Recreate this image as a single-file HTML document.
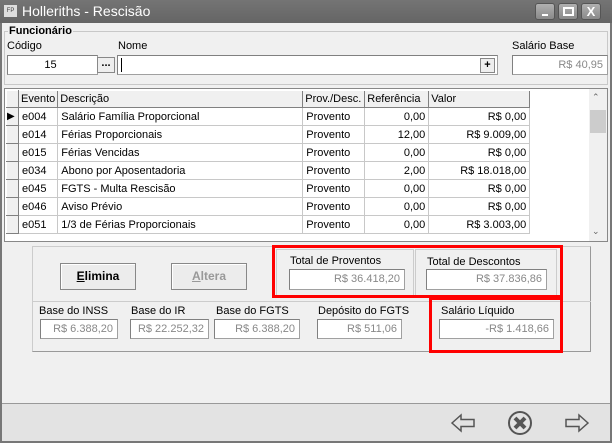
<!DOCTYPE html><html><head><meta charset="utf-8"><style>
*{box-sizing:border-box;margin:0;padding:0}
body{width:612px;height:443px;overflow:hidden;background:#f0f0f0;font-family:"Liberation Sans",sans-serif;font-size:11px;color:#000;position:relative}
.a{position:absolute}
.title{left:0;top:0;width:612px;height:23px;background:linear-gradient(#747474,#656565);color:#fff;font-size:14px}
.wb{top:3px;width:20px;height:17px;background:linear-gradient(#b0b0b0,#8a8a8a);border:1px solid #555;border-radius:3px}
.in{background:#fff;border:1px solid #a0a0a0;border-top-color:#808080;border-left-color:#808080;text-align:right;color:#888;padding-right:4px;line-height:18px}
.grid td{border-right:1px solid #c8c8c8;border-bottom:1px solid #c8c8c8;height:18px;padding:0 3px;white-space:nowrap}
.grid th{font-weight:normal;text-align:left;border-right:1px solid #808080;border-bottom:1px solid #808080;height:17px;padding:0 2px;background:#f0f0f0}
.grid .ind{background:#f0f0f0;border:1px solid #fff;border-right-color:#808080;border-bottom-color:#808080;padding:0}
.r{text-align:right}
.btn{border:1px solid #888;background:#ececec;box-shadow:inset 1px 1px #fff;text-align:center;font-weight:bold;line-height:24px;font-size:12px}
.red{border:3px solid #f00}
</style></head><body>
<div class="a" style="left:0;top:0;width:612px;height:443px;border-left:2px solid #777;border-right:2px solid #777;border-bottom:2px solid #777"></div>
<div class="a title"><div class="a" style="left:4px;top:5px;width:13px;height:12px;background:#ddd;color:#444;font-size:6px;text-align:center;line-height:12px">FP</div><div class="a" style="left:22px;top:3px">Holleriths - Rescisão</div>
<div class="a wb" style="left:535px"><div class="a" style="left:6px;top:10px;width:6px;height:2px;background:#fff"></div></div>
<div class="a wb" style="left:558px"><div class="a" style="left:4px;top:3px;width:11px;height:9px;border:2px solid #fff"></div></div>
<div class="a wb" style="left:581px;color:#fff;font-weight:bold;font-size:13px;text-align:center;line-height:15px">X</div></div>
<div class="a" style="left:4px;top:31px;width:604px;height:54px;border:1px solid #c8c8c8"></div>
<div class="a" style="left:8px;top:25px;font-weight:bold;background:#f0f0f0;padding:0 1px">Funcionário</div>
<div class="a" style="left:7px;top:40px">Código</div>
<div class="a" style="left:118px;top:40px">Nome</div>
<div class="a" style="left:512px;top:40px">Salário Base</div>
<div class="a in" style="left:7px;top:55px;width:91px;height:20px;text-align:center;color:#000">15</div>
<div class="a" style="left:97px;top:57px;width:18px;height:16px;border:1px solid #888;background:#eee;text-align:center;line-height:10px;font-weight:bold">...</div>
<div class="a in" style="left:117px;top:55px;width:381px;height:20px"></div>
<div class="a" style="left:121px;top:58px;width:1px;height:14px;background:#000"></div>
<div class="a" style="left:480px;top:58px;width:15px;height:15px;border:1px solid #888;background:#eee;text-align:center;line-height:13px;font-weight:bold">+</div>
<div class="a in" style="left:512px;top:55px;width:96px;height:20px">R$ 40,95</div>
<div class="a" style="left:4px;top:88px;width:604px;height:154px;background:#fff;border:1px solid #888"></div>
<table class="a grid" style="left:6px;top:90px;border-collapse:collapse;background:#fff">
<tr><th class="ind" style="width:12px"></th><th style="width:39px">Evento</th><th style="width:245px">Descrição</th><th style="width:62px">Prov./Desc.</th><th style="width:64px">Referência</th><th style="width:101px">Valor</th></tr>
<tr><td class="ind" style="font-size:10px">&#9654;</td><td>e004</td><td>Salário Família Proporcional</td><td>Provento</td><td class="r">0,00</td><td class="r">R$ 0,00</td></tr>
<tr><td class="ind"></td><td>e014</td><td>Férias Proporcionais</td><td>Provento</td><td class="r">12,00</td><td class="r">R$ 9.009,00</td></tr>
<tr><td class="ind"></td><td>e015</td><td>Férias Vencidas</td><td>Provento</td><td class="r">0,00</td><td class="r">R$ 0,00</td></tr>
<tr><td class="ind"></td><td>e034</td><td>Abono por Aposentadoria</td><td>Provento</td><td class="r">2,00</td><td class="r">R$ 18.018,00</td></tr>
<tr><td class="ind"></td><td>e045</td><td>FGTS - Multa Rescisão</td><td>Provento</td><td class="r">0,00</td><td class="r">R$ 0,00</td></tr>
<tr><td class="ind"></td><td>e046</td><td>Aviso Prévio</td><td>Provento</td><td class="r">0,00</td><td class="r">R$ 0,00</td></tr>
<tr><td class="ind"></td><td>e051</td><td>1/3 de Férias Proporcionais</td><td>Provento</td><td class="r">0,00</td><td class="r">R$ 3.003,00</td></tr>
</table>
<div class="a" style="left:589px;top:89px;width:18px;height:152px;background:#f0f0f0"><div class="a" style="left:3px;top:3px;font-size:9px;color:#666">&#8963;</div><div class="a" style="left:1px;top:21px;width:16px;height:23px;background:#ccc"></div><div class="a" style="left:3px;top:137px;font-size:9px;color:#666">&#8964;</div></div>
<div class="a" style="left:32px;top:246px;width:559px;height:106px;border:1px solid #ccc;border-bottom-color:#999;border-right-color:#999"></div>
<div class="a" style="left:32px;top:301px;width:559px;height:1px;background:#ccc"></div>
<div class="a btn" style="left:60px;top:263px;width:76px;height:27px"><u>E</u>limina</div>
<div class="a btn" style="left:171px;top:263px;width:76px;height:27px;color:#999"><u>A</u>ltera</div>
<div class="a" style="left:276px;top:249px;width:138px;height:48px;border:1px solid #ccc"></div>
<div class="a" style="left:415px;top:249px;width:142px;height:48px;border:1px solid #ccc"></div>
<div class="a" style="left:290px;top:255px">Total de Proventos</div>
<div class="a" style="left:427px;top:256px">Total de Descontos</div>
<div class="a in" style="left:289px;top:269px;width:116px;height:21px;line-height:19px">R$ 36.418,20</div>
<div class="a in" style="left:426px;top:269px;width:121px;height:21px;line-height:19px">R$ 37.836,86</div>
<div class="a" style="left:39px;top:305px">Base do INSS</div>
<div class="a" style="left:131px;top:305px">Base do IR</div>
<div class="a" style="left:216px;top:305px">Base do FGTS</div>
<div class="a" style="left:318px;top:305px">Depósito do FGTS</div>
<div class="a" style="left:441px;top:305px">Salário Líquido</div>
<div class="a in" style="left:40px;top:319px;width:78px;height:20px">R$ 6.388,20</div>
<div class="a in" style="left:130px;top:319px;width:79px;height:20px">R$ 22.252,32</div>
<div class="a in" style="left:214px;top:319px;width:86px;height:20px">R$ 6.388,20</div>
<div class="a in" style="left:317px;top:319px;width:85px;height:20px">R$ 511,06</div>
<div class="a in" style="left:439px;top:319px;width:115px;height:20px">-R$ 1.418,66</div>
<div class="a red" style="left:272px;top:245px;width:291px;height:53px"></div>
<div class="a red" style="left:429px;top:297px;width:134px;height:56px"></div>
<div class="a" style="left:2px;top:403px;width:608px;height:38px;background:#e3e3e3;border-top:1px solid #999"></div>
<svg class="a" style="left:450px;top:410px" width="150" height="26" viewBox="0 0 150 26" fill="none" stroke="#555" stroke-width="1.5"><path d="M2 13 L11 5 V9.5 H24 V16.5 H11 V21 Z"/><circle cx="70" cy="13" r="11" stroke-width="2"/><path d="M65 8 L75 18 M75 8 L65 18" stroke-width="4"/><path d="M138 13 L129 5 V9.5 H116 V16.5 H129 V21 Z"/></svg>
</body></html>
